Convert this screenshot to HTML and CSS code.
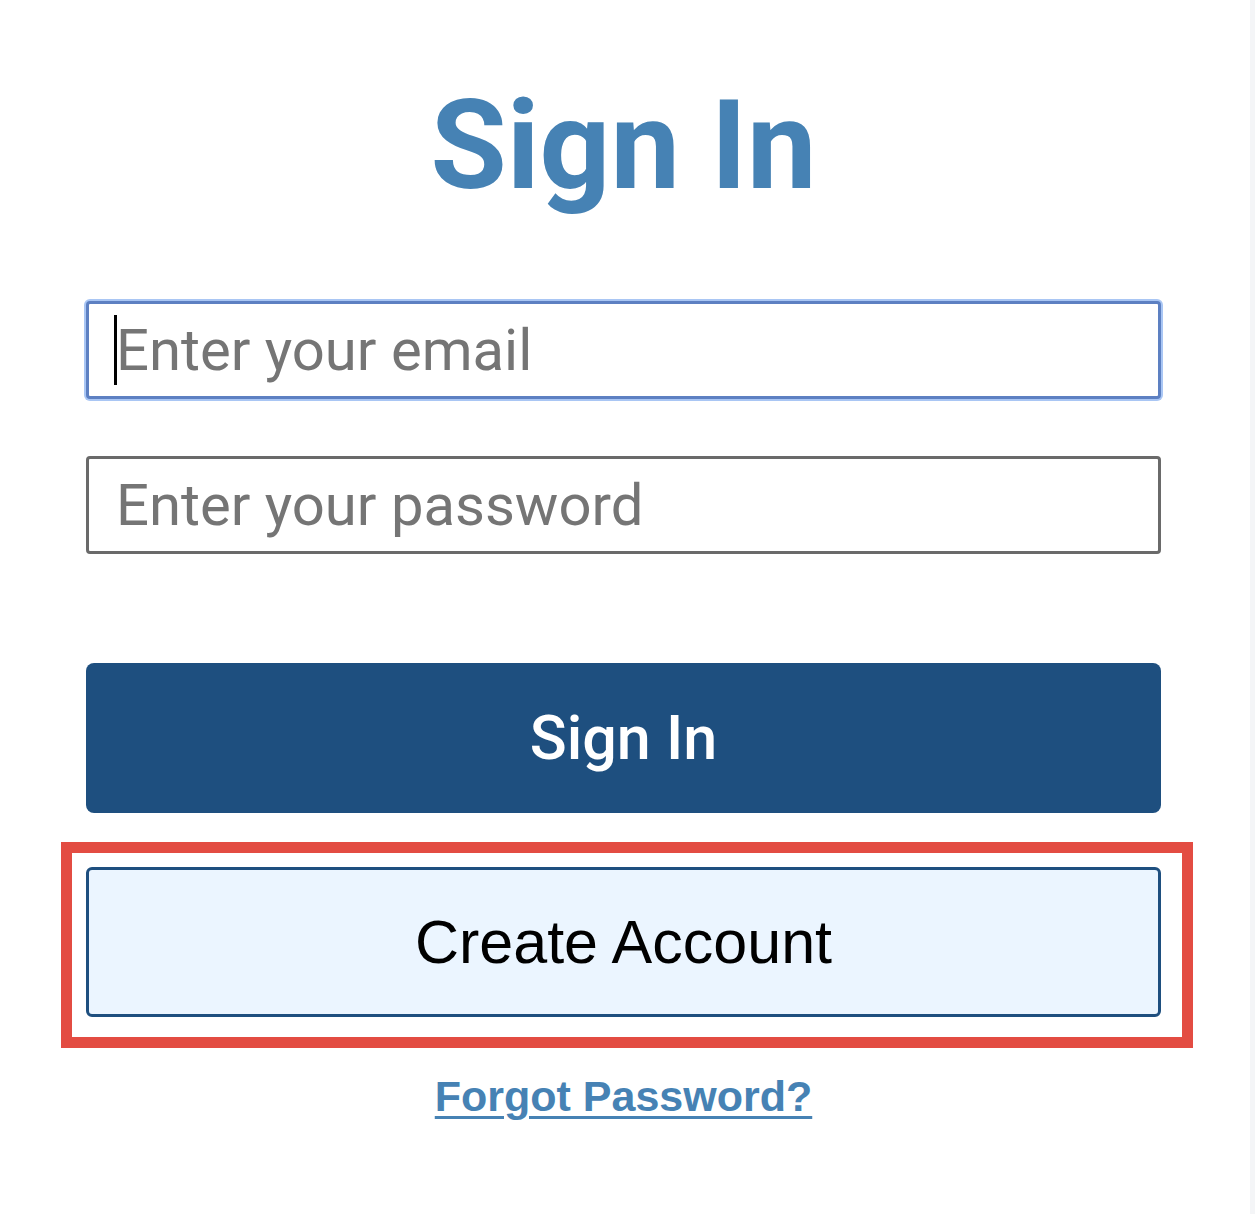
FILE: index.html
```html
<!DOCTYPE html>
<html lang="en">
<head>
<meta charset="utf-8">
<title>Sign In</title>
<link rel="stylesheet" href="styles.css">
</head>
<body>
<main class="page">
  <form class="signin" onsubmit="return false">
    <h1 class="title">Sign In</h1>
    <div class="field field-email">
      <span class="caret"></span>
      <input class="input input-focus" type="email" placeholder="Enter your email">
    </div>
    <div class="field field-password">
      <input class="input" type="password" placeholder="Enter your password">
    </div>
    <button class="btn btn-primary" type="submit">Sign In</button>
    <div class="highlight">
      <button class="btn btn-secondary" type="button">Create Account</button>
    </div>
    <a class="forgot" href="#">Forgot Password?</a>
  </form>
</main>
</body>
</html>
```
FILE: styles.css
```css
html {
  background: #f4f5f7;
}
body {
  margin: 0;
  width: 1250px;
  min-height: 1214px;
  background: #ffffff;
  font-family: Roboto, "Liberation Sans", Arial, sans-serif;
}
.page {
  padding-top: 84px;
}
.signin {
  width: 1075px;
  margin-left: 86px;
  display: flex;
  flex-direction: column;
}
.title {
  margin: 0;
  text-align: center;
  font-family: Roboto, sans-serif;
  font-weight: 700;
  font-size: 124px;
  line-height: 124px;
  color: #4682b4;
}
.field {
  position: relative;
}
.field-email {
  margin-top: 93px;
}
.field-password {
  margin-top: 57px;
}
.input {
  display: block;
  box-sizing: border-box;
  width: 100%;
  height: 98px;
  margin: 0;
  padding: 0 20px 0 27px;
  border: 3px solid #6a6a6a;
  border-radius: 4px;
  background: #fff;
  font-family: Roboto, sans-serif;
  font-size: 58px;
  color: #222;
  outline: none;
}
.input::placeholder {
  color: #757575;
  opacity: 1;
}
.input-focus {
  border-color: #5d80c2;
  box-shadow: 0 0 0 2px #a9c6f4;
}
.caret {
  position: absolute;
  left: 28px;
  top: 14px;
  width: 3px;
  height: 70px;
  background: #000;
  z-index: 1;
}
.btn {
  display: flex;
  align-items: center;
  justify-content: center;
  box-sizing: border-box;
  width: 100%;
  height: 150px;
  margin: 0;
  cursor: pointer;
}
.btn-primary {
  margin-top: 109px;
  border: none;
  border-radius: 8px;
  background: #1e4f7f;
  color: #ffffff;
  font-family: Roboto, sans-serif;
  font-weight: 500;
  font-size: 61px;
}
.highlight {
  margin-top: 29px;
  margin-left: -25px;
  width: 1132px;
  box-sizing: border-box;
  border: 11px solid #e34c42;
  padding: 14px 21px 20px 14px;
}
.btn-secondary {
  border: 3px solid #1e4f7f;
  border-radius: 6px;
  background: #ebf5ff;
  color: #000000;
  font-family: "Liberation Sans", Arial, sans-serif;
  font-weight: 400;
  font-size: 61px;
}
.forgot {
  align-self: center;
  margin-top: 27px;
  font-family: "Liberation Sans", Arial, sans-serif;
  font-weight: 700;
  font-size: 43px;
  line-height: 43px;
  color: #4682b4;
  text-decoration: underline;
  text-decoration-thickness: 3px;
  text-underline-offset: 5px;
}
```
